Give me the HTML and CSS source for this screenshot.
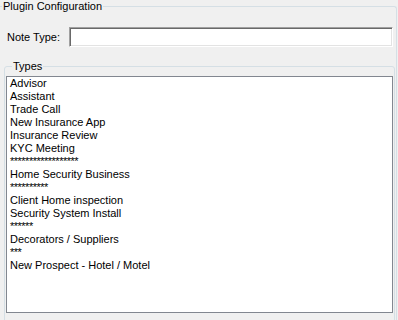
FILE: index.html
```html
<!DOCTYPE html>
<html lang="en">

<head>
    <meta charset="UTF-8">
    <title>Plugin Configuration</title>
    <link rel="stylesheet" href="styles.css">
</head>

<body>
    <fieldset class="config">
        <legend>Plugin Configuration</legend>
        <div class="noterow">
            <label for="notetype">Note Type:</label>
            <input type="text" id="notetype" class="textbox">
        </div>
        <fieldset class="types">
            <legend>Types</legend>
            <div class="listbox">
                <div class="item">Advisor</div>
                <div class="item">Assistant</div>
                <div class="item">Trade Call</div>
                <div class="item">New Insurance App</div>
                <div class="item">Insurance Review</div>
                <div class="item">KYC Meeting</div>
                <div class="item stars">******************</div>
                <div class="item">Home Security Business</div>
                <div class="item stars">**********</div>
                <div class="item">Client Home inspection</div>
                <div class="item">Security System Install</div>
                <div class="item stars">******</div>
                <div class="item">Decorators / Suppliers</div>
                <div class="item stars">***</div>
                <div class="item">New Prospect - Hotel / Motel</div>
            </div>
        </fieldset>
    </fieldset>
</body>

</html>
```

FILE: styles.css
```css
html,
body {
    height: 320px;
    overflow: hidden;
}

body {
    margin: 0;
    background-color: #f0f0f0;
    font-family: 'Liberation Sans', Arial, sans-serif;
    font-size: 11px;
    line-height: 13px;
    color: #000;
}

fieldset {
    margin: 0;
    padding: 0;
    border: 1px solid #d5dfe5;
    border-radius: 3px;
}

legend {
    padding: 0 1px;
    line-height: 13px;
}

.config {
    box-sizing: border-box;
    width: 397px;
    height: 330px;
    border-left: none;
    border-bottom: none;
    border-radius: 0 3px 0 0;
}

.config > legend {
    margin-left: 2px;
}

.noterow {
    display: flex;
    align-items: center;
    gap: 8px;
    margin-top: 14px;
    padding-left: 7px;
}

.textbox {
    box-sizing: border-box;
    width: 324px;
    height: 20px;
    margin: 0 3px 0 auto;
    padding: 0 3px;
    border: 1px solid;
    border-color: #a0a0a0 #fff #fff #a0a0a0;
    box-shadow: inset 1px 1px 0 #696969, inset -1px -1px 0 #e3e3e3;
    background-color: #fff;
    font: inherit;
    outline: none;
}

.types {
    box-sizing: border-box;
    width: 391px;
    height: 268px;
    margin: 13px 0 0 4px;
    padding: 3px 1px 0 1px;
}

.types > legend {
    margin-left: 6px;
}

.listbox {
    box-sizing: border-box;
    width: 387px;
    height: 237px;
    padding: 0 3px;
    border: 1px solid #828790;
    background-color: #fff;
}

.item {
    white-space: nowrap;
}

.stars {
    letter-spacing: -0.5px;
}
```
